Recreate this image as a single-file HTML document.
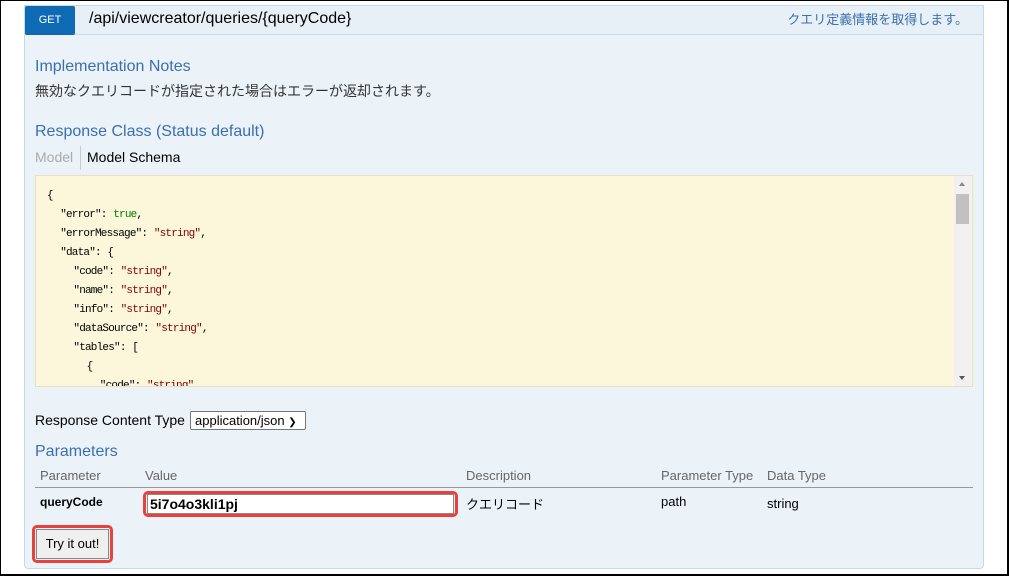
<!DOCTYPE html>
<html><head><meta charset="utf-8"><style>
*{margin:0;padding:0;box-sizing:border-box}
body{width:1009px;height:576px;background:#fff;position:relative;overflow:hidden;font-family:"Liberation Sans","Noto Sans CJK JP",sans-serif}
.frame{position:absolute;left:0;top:0;width:1009px;height:576px;border:1px solid #000;border-right-width:2px;border-bottom-width:2px;z-index:5}
.a{position:absolute;white-space:nowrap}
.panel{position:absolute;left:24px;top:5px;width:960px;height:564px;background:#ebf3f9;border:1px solid #c3d9ec;border-radius:0 0 4px 4px}
.hdr{position:absolute;left:0;top:0;width:958px;height:29px;background:#e7f0f7;border-bottom:1px solid #c3d9ec}
.get{position:absolute;left:0;top:0;width:50px;height:29px;background:#0f6ab4;color:#fff;font-size:11px;text-align:center;line-height:29px;border-radius:2px}
h4{font-weight:normal;color:#3b6fad;font-size:16px}
.code{position:absolute;left:35px;top:175px;width:938px;height:212px;background:#fcf6db;border:1px solid #e5e0c6;overflow:hidden;font-family:"Liberation Mono",monospace;font-size:11px;letter-spacing:-0.8px;word-spacing:0.8px;line-height:19px;padding:11px 0 0 11px;color:#000}
.s{color:#800000}.t{color:#008000}
.sb{position:absolute;right:1px;top:0;width:17px;height:210px;background:#f1f1f1}
.th{position:absolute;left:2px;top:18px;width:13px;height:30px;background:#c1c1c1}
</style></head><body>
<div class="frame"></div>
<div class="panel">
<div class="hdr"><div class="get">GET</div>
<div class="a" style="left:64px;top:4px;font-size:16px;color:#000">/api/viewcreator/queries/{queryCode}</div>
<div class="a" style="right:15px;top:3px;font-size:13px;color:#3b6fad">クエリ定義情報を取得します。</div></div>
</div>
<h4 class="a" style="left:35px;top:58px">Implementation Notes</h4>
<div class="a" style="left:35px;top:81px;font-size:14px;color:#333">無効なクエリコードが指定された場合はエラーが返却されます。</div>
<h4 class="a" style="left:35px;top:123px">Response Class (Status default)</h4>
<div class="a" style="left:35px;top:149px;font-size:14px;color:#aaa">Model</div>
<div class="a" style="left:80px;top:146px;width:1px;height:24px;background:#ccc"></div>
<div class="a" style="left:87px;top:149px;font-size:14px;color:#000">Model Schema</div>
<div class="code"><pre style="font:inherit">{
&#160;&#160;"error": <span class="t">true</span>,
&#160;&#160;"errorMessage": <span class="s">"string"</span>,
&#160;&#160;"data": {
&#160;&#160;&#160;&#160;"code": <span class="s">"string"</span>,
&#160;&#160;&#160;&#160;"name": <span class="s">"string"</span>,
&#160;&#160;&#160;&#160;"info": <span class="s">"string"</span>,
&#160;&#160;&#160;&#160;"dataSource": <span class="s">"string"</span>,
&#160;&#160;&#160;&#160;"tables": [
&#160;&#160;&#160;&#160;&#160;&#160;{
&#160;&#160;&#160;&#160;&#160;&#160;&#160;&#160;"code": <span class="s">"string"</span>,</pre>
<div class="sb"><div style="position:absolute;left:5px;top:6px;border:3.5px solid transparent;border-bottom:4px solid #888;border-top:0"></div><div class="th"></div><div style="position:absolute;left:5px;bottom:6px;border:3.5px solid transparent;border-top:4px solid #555;border-bottom:0"></div></div></div>
<div class="a" style="left:35px;top:412px;font-size:14px;color:#000">Response Content Type</div>
<div class="a" style="left:190px;top:411px;width:116px;height:19px;border:1px solid #767676;border-radius:2px;background:#fff;font-size:13px;line-height:17px;padding-left:4px">application/json <span style="font-size:10px">&#10095;</span></div>
<h4 class="a" style="left:35px;top:443px">Parameters</h4>
<div class="a" style="left:40px;top:468px;font-size:13px;color:#666">Parameter</div>
<div class="a" style="left:145px;top:468px;font-size:13px;color:#666">Value</div>
<div class="a" style="left:466px;top:468px;font-size:13px;color:#666">Description</div>
<div class="a" style="left:661px;top:468px;font-size:13px;color:#666">Parameter Type</div>
<div class="a" style="left:767px;top:468px;font-size:13px;color:#666">Data Type</div>
<div class="a" style="left:35px;top:487px;width:938px;height:1px;background:#999"></div>
<div class="a" style="left:40px;top:495px;font-size:12px;font-weight:bold;color:#000">queryCode</div>
<div class="a" style="left:143px;top:491px;width:315px;height:26px;border:3px solid #e8423d;border-radius:5px"></div>
<div class="a" style="left:147px;top:494px;width:307px;height:20px;border:1px solid #888;background:#fff;font-size:14px;font-weight:bold;padding-left:2px;line-height:18px">5i7o4o3kli1pj</div>
<div class="a" style="left:466px;top:494px;font-size:13px;color:#000">クエリコード</div>
<div class="a" style="left:661px;top:494px;font-size:13px;color:#000">path</div>
<div class="a" style="left:767px;top:496px;font-size:13px;color:#000">string</div>
<div class="a" style="left:32px;top:525px;width:81px;height:38px;border:3px solid #e8423d;border-radius:5px"></div>
<div class="a" style="left:36px;top:529px;width:73px;height:30px;border:1px solid #888;background:#efefef;font-size:13px;text-align:center;line-height:28px">Try it out!</div>
</body></html>
